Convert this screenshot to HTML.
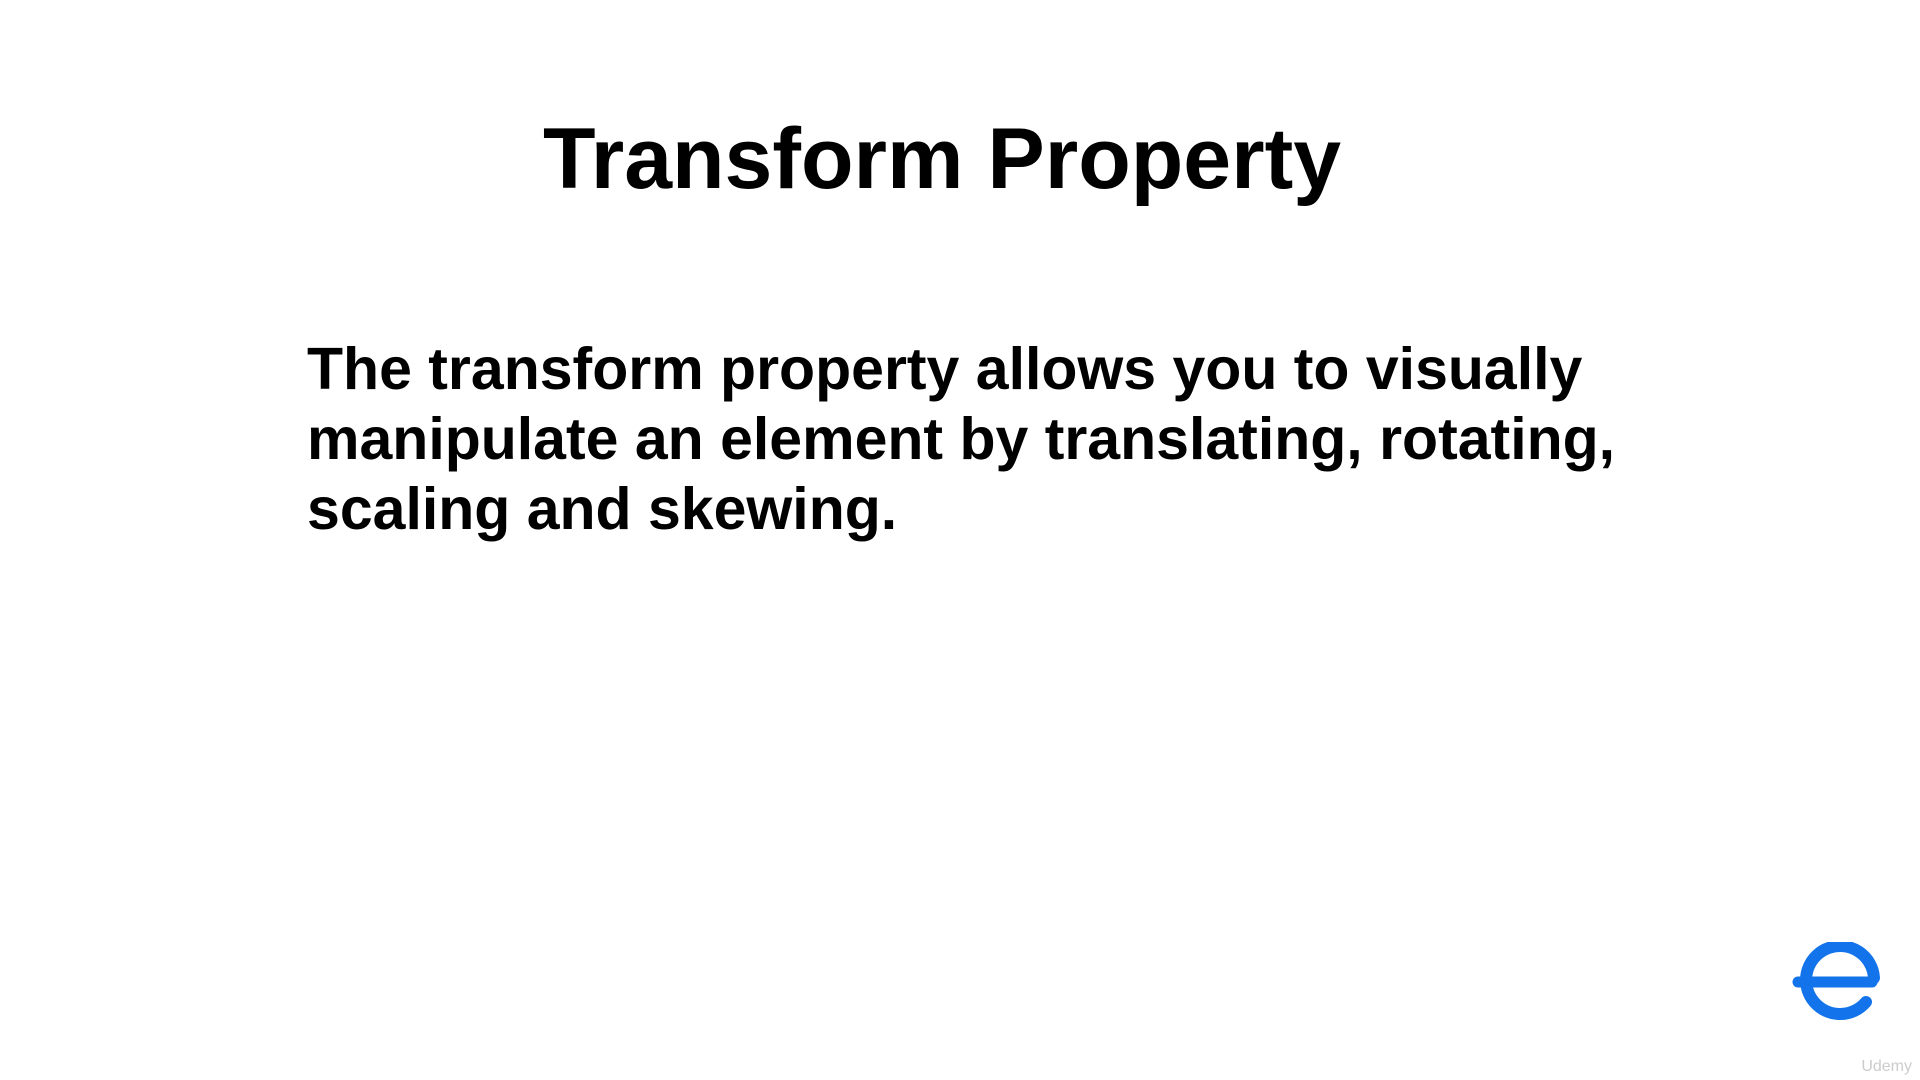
<!DOCTYPE html>
<html><head><meta charset="utf-8"><style>
html,body{margin:0;padding:0;background:#fff;}
body{width:1920px;height:1080px;position:relative;overflow:hidden;font-family:"Liberation Sans",Arial,sans-serif;}
.t{position:absolute;left:0;width:1884px;text-align:center;top:116px;font-size:86px;font-weight:bold;color:#000;line-height:1;}
.b{position:absolute;left:307px;top:334px;font-size:59px;font-weight:bold;color:#000;line-height:70px;white-space:pre;}
.logo{position:absolute;left:1790px;top:942px;}
.u{position:absolute;right:8px;bottom:4px;font-size:16px;color:#ccc;}
</style></head><body>
<div class="t">Transform Property</div>
<div class="b">The transform property allows you to visually
manipulate an element by translating, rotating,
scaling and skewing.</div>
<svg class="logo" width="92" height="80" viewBox="0 0 92 80">
<path d="M84 36 A34 34 0 1 0 76 60" fill="none" stroke="#1273eb" stroke-width="12" stroke-linecap="round"/>
<path d="M8 40 H82" stroke="#1273eb" stroke-width="11" stroke-linecap="round"/>
</svg>
<div class="u">Udemy</div>
</body></html>
